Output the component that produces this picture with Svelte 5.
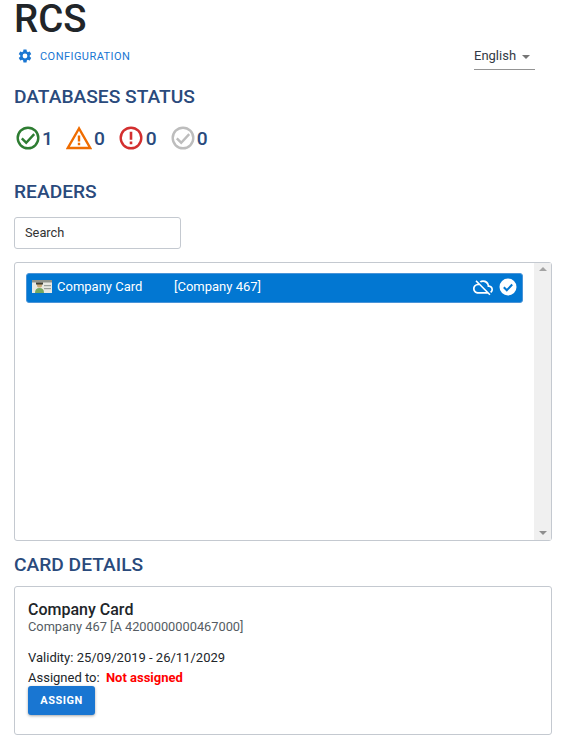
<script>
  const statuses = [
    { n: 1, kind: 'ok' },
    { n: 0, kind: 'warn' },
    { n: 0, kind: 'err' },
    { n: 0, kind: 'off' }
  ];
</script>

<div class="page">
  <h1>RCS</h1>
  <div class="topbar">
    <a class="config" href="#cfg">
      <svg class="gear" viewBox="0 0 24 24" width="16" height="16"><path fill="#1976d2" d="M19.14 12.94c.04-.3.06-.61.06-.94 0-.32-.02-.64-.07-.94l2.03-1.58a.49.49 0 0 0 .12-.61l-1.92-3.32a.49.49 0 0 0-.59-.22l-2.39.96c-.5-.38-1.03-.7-1.62-.94l-.36-2.54a.48.48 0 0 0-.48-.41h-3.84c-.24 0-.43.17-.47.41l-.36 2.54c-.59.24-1.13.57-1.62.94l-2.39-.96a.49.49 0 0 0-.59.22L2.74 8.87c-.12.21-.08.47.12.61l2.03 1.58c-.05.3-.09.63-.09.94s.02.64.07.94l-2.03 1.58a.49.49 0 0 0-.12.61l1.92 3.32c.12.22.37.29.59.22l2.39-.96c.5.38 1.03.7 1.62.94l.36 2.54c.05.24.24.41.48.41h3.84c.24 0 .44-.17.47-.41l.36-2.54c.59-.24 1.13-.56 1.62-.94l2.39.96c.22.08.47 0 .59-.22l1.92-3.32c.12-.22.07-.47-.12-.61l-2.01-1.58zM12 15.6A3.6 3.6 0 1 1 12 8.4a3.6 3.6 0 0 1 0 7.2z"/></svg>
      <span>CONFIGURATION</span>
    </a>
    <div class="lang"><span>English</span><i class="caret"></i></div>
  </div>

  <h2 class="dbs">DATABASES STATUS</h2>
  <div class="statuses">
    {#each statuses as s}
      <div class="status {s.kind}">
        {#if s.kind === 'warn'}
          <svg viewBox="0 0 26 24" width="26" height="24"><path d="M13 2.5 1.8 22h22.4z" fill="none" stroke="#ef6c00" stroke-width="2.4" stroke-linejoin="miter"/><path d="M13 9.5v6M13 16.800v2.400" stroke="#ef6c00" stroke-width="2.400" fill="none"/></svg>
        {:else if s.kind === 'err'}
          <svg viewBox="0 0 24 24" width="24" height="24"><circle cx="12" cy="12" r="10.300" fill="none" stroke="#d32f2f" stroke-width="2.400"/><path d="M12 5.800v8M12 15.600v2.600" stroke="#d32f2f" stroke-width="2.600" fill="none"/></svg>
        {:else}
          <svg viewBox="0 0 24 24" width="24" height="24"><circle cx="12" cy="12" r="10.300" fill="none" stroke={s.kind === 'ok' ? '#2e7d32' : '#bdbdbd'} stroke-width="2.400"/><path d="M5.800 12.300l4.400 4.400 8-8.600" fill="none" stroke={s.kind === 'ok' ? '#2e7d32' : '#bdbdbd'} stroke-width="2.400"/></svg>
        {/if}
        <span>{s.n}</span>
      </div>
    {/each}
  </div>

  <h2 class="readers">READERS</h2>
  <input class="search" placeholder="Search" />

  <div class="listbox">
    <div class="list">
      <div class="row">
        <svg class="cardicon" viewBox="0 0 20 13" width="20" height="13">
          <rect width="20" height="13" fill="#e8e8e2"/>
          <rect width="20" height="2.500" fill="#8f938c"/>
          <rect x="12" y="5" width="7" height="1.200" fill="#9aa09a"/>
          <rect x="12" y="8" width="7" height="1.200" fill="#9aa09a"/>
          <circle cx="7.500" cy="5" r="2.600" fill="#c9a877"/>
          <rect x="4" y="2.500" width="7" height="2" fill="#3f3d33"/>
          <path d="M3 13c0-3.500 1.500-5 4.500-5s4.500 1.500 4.500 5z" fill="#74a860"/>
        </svg>
        <span class="name">Company Card</span>
        <span class="company">[Company 467]</span>
        <svg class="cloud" viewBox="0 0 24 24" width="20" height="20"><path fill="#fff" d="M19.35 10.04A7.490 7.490 0 0 0 12 4c-1.480 0-2.850.43-4.010 1.170l1.460 1.460a5.497 5.497 0 0 1 8.050 4.870v.5H19c1.660 0 3 1.340 3 3 0 1.130-.64 2.110-1.560 2.620l1.450 1.450C23.160 18.160 24 16.680 24 15c0-2.640-2.050-4.780-4.650-4.960zM3 5.270l2.750 2.740C2.560 8.150 0 10.770 0 14c0 3.310 2.690 6 6 6h11.730l2 2L21 20.730 4.270 4 3 5.270zM7.730 10l8 8H6c-2.210 0-4-1.790-4-4s1.790-4 4-4h1.730z"/></svg>
        <svg class="tick" viewBox="0 0 18 18" width="18" height="18"><circle cx="9" cy="9" r="8.500" fill="#fff"/><path d="M4.800 9.300l3 3 5.400-5.800" fill="none" stroke="#0277d2" stroke-width="2"/></svg>
      </div>
    </div>
    <div class="scrollbar">
      <i class="up"></i>
      <i class="down"></i>
    </div>
  </div>

  <h2 class="details">CARD DETAILS</h2>
  <div class="card">
    <div class="title">Company Card</div>
    <div class="sub">Company 467 [A 4200000000467000]</div>
    <div class="validity">Validity: 25/09/2019 - 26/11/2029</div>
    <div class="assigned">Assigned to: <b>Not assigned</b></div>
    <button>ASSIGN</button>
  </div>
</div>

<style>
  :global(body) { margin: 0; background: #fff; font-family: Roboto, sans-serif; }
  .page { padding: 0 15px 0 14px; width: 538px; }
  h1 { margin: 0; font-size: 38.4px; line-height: 37px; font-weight: 500; color: #212529; height: 37px; }
  .topbar { display: flex; justify-content: space-between; margin-top: 5px; padding-left: 3px; height: 28px; }
  .config { display: flex; align-items: center; gap: 7px; height: 28px; text-decoration: none; color: #1976d2; font-size: 11px; letter-spacing: .45px; align-self: flex-start; }
  .lang { box-sizing: content-box; width: 61px; height: 27px; margin-right: 17px; border-bottom: 1px solid #949494; display: flex; align-items: center; font-size: 13px; color: #333a45; gap: 6px; }
  .caret { width: 0; height: 0; border: 4px solid transparent; border-top: 4px solid #757575; border-bottom: 0; margin-top: 2px; }
  h2 { margin: 0; font-size: 19.2px; line-height: 24px; font-weight: 500; color: #2a4a7c; }
  .dbs { margin-top: 15px; }
  .statuses { display: flex; align-items: center; margin-top: 16px; padding-left: 2px; height: 26px; gap: 13px; }
  .status { display: flex; align-items: center; gap: 2px; font-size: 19.2px; font-weight: 500; color: #2a4a7c; }
  .status.warn { margin-right: 1px; }
  .status.err { margin-right: 1px; gap: 3px; }
  .readers { margin-top: 29px; }
  .search { display: block; box-sizing: border-box; margin-top: 13px; width: 167px; height: 32px; border: 1px solid #c4c9d0; border-radius: 3px; padding: 0 10px 2px; font: 12.8px Roboto, sans-serif; outline: none; }
  .search::placeholder { color: #333; opacity: 1; }
  .listbox { display: flex; box-sizing: border-box; margin-top: 13px; width: 538px; height: 279px; border: 1px solid #c4c9d0; border-radius: 3px; }
  .list { flex: 1; padding: 10px 11px 0 11px; }
  .row { box-sizing: border-box; display: flex; align-items: center; height: 30px; background: #0277d2; border: 1px solid #4a94d8; border-radius: 3px; padding: 0 5px 3px; color: #fff; font-size: 13px; }
  .cardicon { margin-right: 5px; margin-top: -1px; }
  .name { width: 117px; }
  .cloud { margin-left: auto; margin-right: 6px; }
  .tick { margin-right: 0; }
  .scrollbar { width: 17px; background: #f0f0f0; position: relative; }
  .up, .down { position: absolute; left: 5px; width: 0; height: 0; border: 4px solid transparent; }
  .up { top: 4px; border-top: 0; border-bottom: 4px solid #a3a3a3; }
  .down { bottom: 5px; border-bottom: 0; border-top: 4px solid #8f8f8f; }
  .details { margin-top: 12px; }
  .card { box-sizing: border-box; margin-top: 9px; width: 538px; height: 149px; border: 1px solid #c4c9d0; border-radius: 3px; padding: 14px 13px; color: #212529; font-size: 13px; }
  .title { font-size: 16px; line-height: 18px; font-weight: 500; }
  .sub { color: #555c63; font-size: 12.8px; line-height: 15px; }
  .validity { margin-top: 14px; line-height: 20px; }
  .assigned { line-height: 19px; }
  .assigned b { color: #f00; font-weight: 700; margin-left: 3px; }
  button { display: block; width: 67px; height: 29px; margin-top: -1px; border: 0; border-radius: 3px; background: #1976d2; color: #fff; font: 700 11px Roboto, sans-serif; letter-spacing: .5px; box-shadow: 0 1px 3px rgba(0,0,0,.35); padding: 0; }
</style>
